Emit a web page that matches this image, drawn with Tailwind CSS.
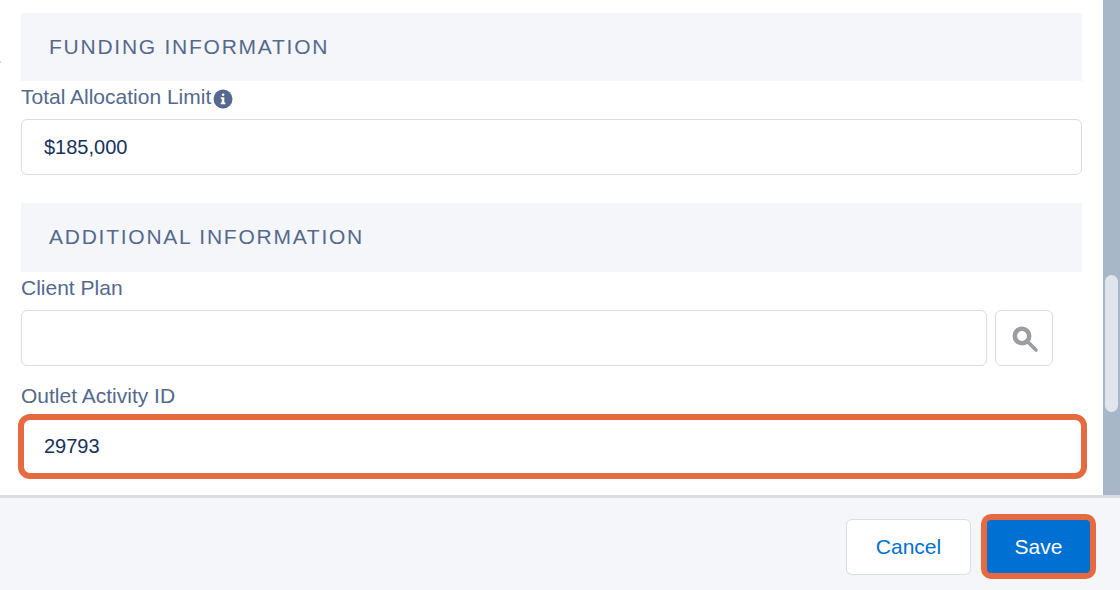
<!DOCTYPE html>
<html lang="en">
<head>
  <meta charset="UTF-8" />
  <title>Funding form</title>
  <script src="https://cdn.jsdelivr.net/npm/@tailwindcss/browser@4"></script>
</head>
<body class="bg-white font-['Liberation_Sans',Arial,sans-serif]">
  <div class="w-[1120px] h-[590px] overflow-hidden flex flex-col relative">
    <div class="absolute left-0 top-[61px] w-px h-[2px] bg-gray-300"></div>

    <div class="h-[495px] flex shrink-0">
      <main class="w-[1103px] pl-[21px] pr-[21px] pt-[13px]">
        <section>
          <h2 class="h-[68px] bg-[#f4f6f9] pl-[28px] pb-[1px] flex items-center text-[21px] tracking-[1.75px] text-[#54698d]">FUNDING INFORMATION</h2>
          <label class="h-[38px] pb-[6px] flex items-center gap-[2px] text-[21px] text-[#54698d]">
            Total Allocation Limit
            <svg class="w-[20px] h-[20px] mt-[4px]" viewBox="0 0 20 20"><circle cx="10" cy="10" r="9.5" fill="#54698d"/><rect x="8.8" y="4.4" width="2.6" height="2.6" rx="1.2" fill="#fff"/><path d="M7.8 8.3h3.5v5.2h1.1v1.7H7.7v-1.7h1.1V10H7.8z" fill="#fff"/></svg>
          </label>
          <div class="h-[56px] border border-[#d8dde6] rounded-[6px] pl-[22px] flex items-center text-[20px] text-[#16325c]">$185,000</div>
        </section>

        <section class="mt-[28px]">
          <h2 class="h-[69px] bg-[#f4f6f9] pl-[28px] pb-[1px] flex items-center text-[21px] tracking-[1.75px] text-[#54698d]">ADDITIONAL INFORMATION</h2>
          <label class="h-[38px] pb-[6px] flex items-center text-[21px] text-[#54698d]">Client Plan</label>
          <div class="flex gap-[8px]">
            <div class="w-[966px] h-[56px] border border-[#d8dde6] rounded-[6px]"></div>
            <button class="w-[58px] h-[56px] border border-[#d8dde6] rounded-[6px] flex items-center justify-center">
              <svg class="w-[28px] h-[28px] mt-[2px] ml-[2px]" viewBox="0 0 28 28" fill="none" stroke="#9a9ea3"><circle cx="11" cy="11" r="7.2" stroke-width="4.6"/><path d="M17 17l8 8" stroke-width="3.6" stroke-linecap="round"/></svg>
            </button>
          </div>
          <label class="h-[54px] pt-[6px] flex items-center text-[21px] text-[#54698d]">Outlet Activity ID</label>
          <div class="relative h-[53px] pl-[23px] pb-[1px] flex items-center text-[20px] text-[#16325c]">
            29793
            <div class="absolute -left-[3px] -right-[5px] -top-[6px] -bottom-[6px] border-[6px] border-[#e56a40] rounded-[12px]"></div>
          </div>
        </section>
      </main>

      <div class="w-[17px] bg-[#a8b7c7] pt-[275px] pl-[2px] pr-[2px]">
        <div class="h-[137px] bg-[#e0e5ee] rounded-[7px]"></div>
      </div>
    </div>

    <footer class="flex-1 bg-[#f4f6f9] border-t-[3px] border-[#d8dde6] flex items-start justify-end gap-[10px] pt-[16px] pr-[24px]">
      <button class="w-[125px] h-[56px] mt-[5px] bg-white border border-[#d8dde6] rounded-[6px] text-[21px] text-[#0070d2]">Cancel</button>
      <button class="w-[115px] h-[65px] bg-[#0070d2] border-[6px] border-[#e56a40] rounded-[10px] text-[21px] text-white">Save</button>
    </footer>
  </div>
</body>
</html>
